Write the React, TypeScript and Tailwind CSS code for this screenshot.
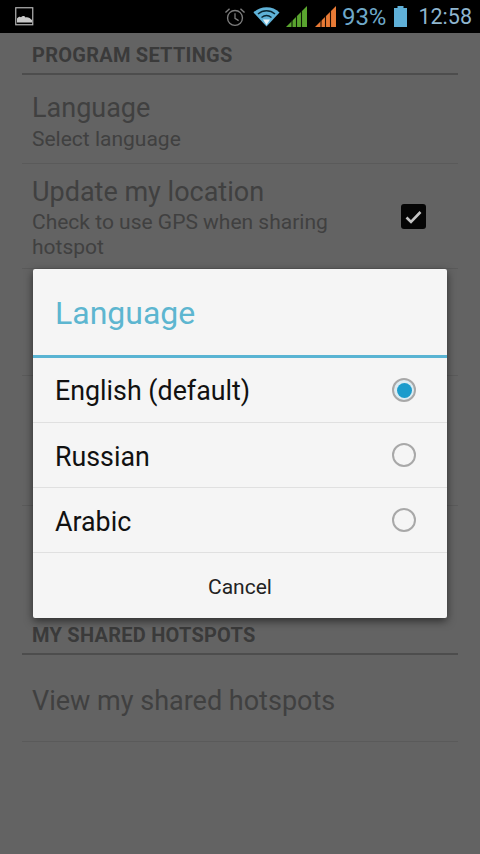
const font = "font-['Roboto',sans-serif]";

function StatusBar() {
  return (
    <div className="h-[33px] bg-black flex items-center pl-[15px] pr-[8px] shrink-0">
      <svg width="19" height="19" viewBox="0 0 19 19" className="shrink-0">
        <rect x="0.75" y="0.75" width="17" height="17" fill="none" stroke="#b5b5b5" strokeWidth="1.2" />
        <path d="M2 15.5V11.5C3.5 9.5 5 9.2 6 10.2C7.5 8.5 9.5 8.8 10.5 10.4C12.5 9.6 15 10.6 17 13V15.5Z" fill="#c9c9c9" />
      </svg>
      <div className="flex-1" />
      <svg width="22" height="20" viewBox="0 0 24 22" className="shrink-0 mr-[7px]" fill="none" stroke="#7d7d7d">
        <circle cx="12" cy="12" r="8.2" strokeWidth="1.5" />
        <path d="M12 7V12.5L16 15" strokeWidth="1.4" />
        <path d="M1.5 6L6 2M22.5 6L18 2" strokeWidth="1.6" />
      </svg>
      <svg width="27" height="21" viewBox="0 0 27 21" className="shrink-0 mr-[6px]">
        <path d="M0.5 6.5C7 -0.5 20 -0.5 26.5 6.5L13.5 20.5Z" fill="#5fb2d8" />
        <path d="M5 8C10 3.6 17 3.6 22 8" fill="none" stroke="#0a2733" strokeWidth="1.4" />
        <path d="M8.5 11.5C11.5 9 15.5 9 18.5 11.5" fill="none" stroke="#0a2733" strokeWidth="1.4" />
        <path d="M10 13.6H17L13.5 19Z" fill="#e6f4fa" />
      </svg>
      <svg width="22" height="22" viewBox="0 0 22 22" className="shrink-0 mr-[7px]">
        <path d="M0 21L21 0V21Z" fill="#5aa52f" />
        <path d="M6 21V14M10.5 21V10M15.5 21V5" stroke="#0c1a06" strokeWidth="1.1" />
      </svg>
      <svg width="22" height="22" viewBox="0 0 22 22" className="shrink-0 mr-[5px]">
        <path d="M0 21L21 0V21Z" fill="#e87a35" />
        <path d="M6 21V14M10.5 21V10M15.5 21V5" stroke="#1c0d03" strokeWidth="1.1" />
      </svg>
      <span className={`${font} text-[24px] leading-none text-[#6fa9c9] mr-[7px]`}>93%</span>
      <svg width="15" height="22" viewBox="0 0 15 22" className="shrink-0 mr-[10px]">
        <path d="M4.5 0H10.5V2H14V21H1V2H4.5Z" fill="#5fb0d8" />
      </svg>
      <span className={`${font} text-[21.5px] leading-none text-[#8fb6cf]`}>12:58</span>
    </div>
  );
}

function SectionTitle({ children }: { children: string }) {
  return (
    <div className="border-b-2 border-[#4d4d4d] h-[35px] flex items-start pt-[5px] px-[10px] shrink-0">
      <span className={`${font} font-bold text-[20px] leading-[20px] tracking-[0.25px] text-[#3a3a3a]`}>{children}</span>
    </div>
  );
}

function Dialog() {
  const options = [
    { label: "English (default)", on: true, offset: "mt-[2px]" },
    { label: "Russian", on: false, offset: "mt-[4px]" },
    { label: "Arabic", on: false, offset: "mt-[4px]" },
  ];
  return (
    <div className="absolute left-[33px] top-[269px] w-[414px] h-[349px] bg-[#f5f5f5] rounded-[2px] shadow-[0_3px_8px_rgba(0,0,0,0.55)] flex flex-col">
      <div className="h-[86px] flex items-center px-[22px] border-b-[3px] border-[#59b4d3] box-content">
        <span className={`${font} text-[32px] leading-none mt-[2px] text-[#5db6d0]`}>Language</span>
      </div>
      {options.map((o) => (
        <div key={o.label} className="h-[65px] flex items-center justify-between pr-[31px] pl-[22px] border-b border-[#e0e0e0] shrink-0">
          <span className={`${font} text-[26.8px] leading-none ${o.offset} text-[#111111]`}>{o.label}</span>
          <span className={`w-[24px] h-[24px] rounded-full border-2 border-[#a8a8a8] flex items-center justify-center ${o.on ? "bg-[#dcecf2]" : ""}`}>
            {o.on && <span className="w-[15px] h-[15px] rounded-full bg-[#1b9ccc]" />}
          </span>
        </div>
      ))}
      <div className="flex-1 flex items-center justify-center">
        <span className={`${font} text-[21px] leading-none mt-[4px] text-[#222222]`}>Cancel</span>
      </div>
    </div>
  );
}

export default function App() {
  return (
    <div className="relative w-[480px] h-[854px] overflow-hidden bg-[#636363] flex flex-col">
      <StatusBar />
      <div className="flex flex-col mx-[22px] pt-[7px]">
        <SectionTitle>PROGRAM SETTINGS</SectionTitle>
        <div className="h-[89px] border-b border-[#5a5a5a] px-[10px] pt-[17px] shrink-0">
          <div className={`${font} text-[27px] leading-[32px] text-[#404040]`}>Language</div>
          <div className={`${font} text-[21px] leading-[26px] mt-[2px] text-[#404040]`}>Select language</div>
        </div>
        <div className="h-[105px] border-b border-[#5a5a5a] pl-[10px] pr-[32px] pt-[12px] flex items-start justify-between shrink-0">
          <div className="w-[320px]">
            <div className={`${font} text-[27px] leading-[32px] text-[#404040]`}>Update my location</div>
            <div className={`${font} text-[21px] leading-[25px] mt-[2px] text-[#404040]`}>Check to use GPS when sharing hotspot</div>
          </div>
          <div className="w-[25px] h-[25px] mt-[28px] rounded-[3px] bg-[#050505] flex items-center justify-center">
            <svg width="17" height="14" viewBox="0 0 17 14" fill="none">
              <path d="M1.5 7.5L6 12L15.5 2" stroke="#c4c4c4" strokeWidth="2.6" />
            </svg>
          </div>
        </div>
        <div className="h-[107px] border-b border-[#5a5a5a] shrink-0" />
        <div className="h-[130px] border-b border-[#5a5a5a] shrink-0" />
        <div className="h-[149px] flex flex-col justify-end shrink-0">
          <SectionTitle>MY SHARED HOTSPOTS</SectionTitle>
        </div>
        <div className="h-[87px] border-b border-[#5a5a5a] px-[10px] pt-[6px] flex items-center shrink-0">
          <span className={`${font} text-[27px] leading-none text-[#404040]`}>View my shared hotspots</span>
        </div>
      </div>
      <Dialog />
    </div>
  );
}
